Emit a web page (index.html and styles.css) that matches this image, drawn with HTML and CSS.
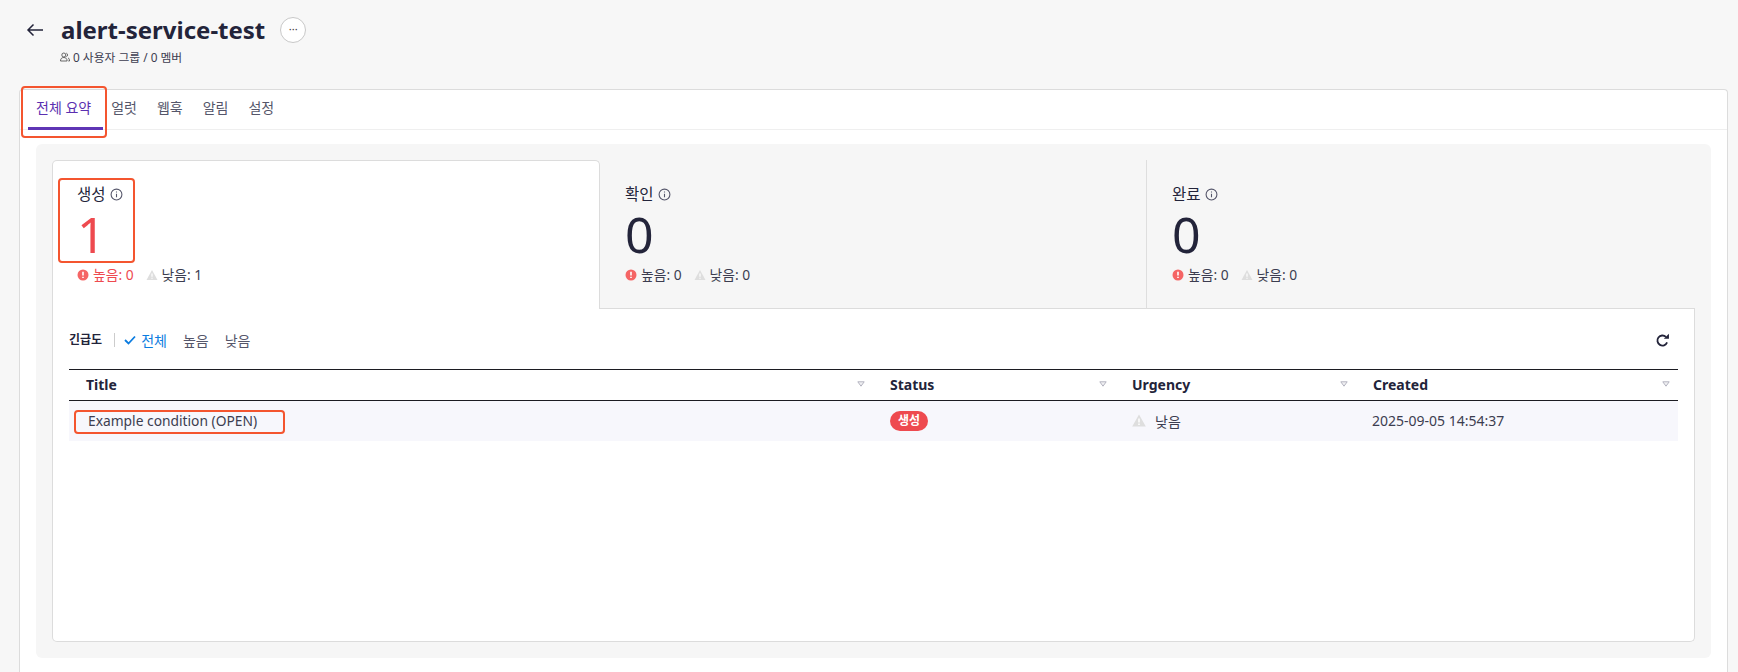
FILE: index.html
```html
<!DOCTYPE html>
<html lang="ko">
<head>
<meta charset="utf-8">
<title>alert-service-test</title>
<link rel="stylesheet" href="styles.css">
</head>
<body>
<header class="page-head">
  <div class="title-row">
    <svg class="back" viewBox="0 0 18 14" width="18" height="14"><path d="M17 7H2M7.5 1.5 2 7l5.500 5.500" fill="none" stroke="#23243a" stroke-width="1.500"/></svg>
    <h1 class="title">alert-service-test</h1>
    <span class="more">···</span>
  </div>
  <div class="sub">
    <svg viewBox="0 0 10 10" width="10" height="10"><circle cx="3.800" cy="3" r="2" fill="none" stroke="#444" stroke-width=".8"/><path d="M.5 9c0-2.300 1.300-3.500 3.300-3.500S7.100 6.700 7.100 9zM6.300 1.100a2 2 0 0 1 0 3.700M8 5.800c1 .5 1.500 1.600 1.500 3.200H8.300" fill="none" stroke="#444" stroke-width=".8"/></svg>
    <span>0 사용자 그룹 / 0 멤버</span>
  </div>
</header>

<main class="card">
  <nav class="tabs">
    <a class="tab active">전체 요약</a>
    <a class="tab">얼럿</a>
    <a class="tab">웹훅</a>
    <a class="tab">알림</a>
    <a class="tab">설정</a>
  </nav>
  <section class="panel">
    <div class="stats">
      <div class="stat selected">
        <div class="stat-label">생성 <svg class="info" viewBox="0 0 12 12" width="13" height="13"><circle cx="6" cy="6" r="5" fill="none" stroke="#55566a"/><path d="M6 5.300v3.200M6 3.200v1" stroke="#55566a"/></svg></div>
        <div class="stat-num red">1</div>
        <div class="counts">
          <span class="count red"><svg viewBox="0 0 12 12" width="12" height="12"><circle cx="6" cy="6" r="5.500" fill="#f56565"/><path d="M6 2.800v3.800M6 7.800v1.300" stroke="#fff" stroke-width="1.600"/></svg>높음: 0</span>
          <span class="count"><svg viewBox="0 0 12 12" width="12" height="12"><path d="M6 1 11.500 11H.5z" fill="#dedede"/><path d="M6 4.500v3.300M6 8.700v1.100" stroke="#fff" stroke-width="1.200"/></svg>낮음: 1</span>
        </div>
      </div>
      <div class="stat">
        <div class="stat-label">확인 <svg class="info" viewBox="0 0 12 12" width="13" height="13"><circle cx="6" cy="6" r="5" fill="none" stroke="#55566a"/><path d="M6 5.300v3.200M6 3.200v1" stroke="#55566a"/></svg></div>
        <div class="stat-num">0</div>
        <div class="counts">
          <span class="count"><svg viewBox="0 0 12 12" width="12" height="12"><circle cx="6" cy="6" r="5.500" fill="#f56565"/><path d="M6 2.800v3.800M6 7.800v1.300" stroke="#fff" stroke-width="1.600"/></svg>높음: 0</span>
          <span class="count"><svg viewBox="0 0 12 12" width="12" height="12"><path d="M6 1 11.500 11H.5z" fill="#dedede"/><path d="M6 4.500v3.300M6 8.700v1.100" stroke="#fff" stroke-width="1.200"/></svg>낮음: 0</span>
        </div>
      </div>
      <div class="stat">
        <div class="stat-label">완료 <svg class="info" viewBox="0 0 12 12" width="13" height="13"><circle cx="6" cy="6" r="5" fill="none" stroke="#55566a"/><path d="M6 5.300v3.200M6 3.200v1" stroke="#55566a"/></svg></div>
        <div class="stat-num">0</div>
        <div class="counts">
          <span class="count"><svg viewBox="0 0 12 12" width="12" height="12"><circle cx="6" cy="6" r="5.500" fill="#f56565"/><path d="M6 2.800v3.800M6 7.800v1.300" stroke="#fff" stroke-width="1.600"/></svg>높음: 0</span>
          <span class="count"><svg viewBox="0 0 12 12" width="12" height="12"><path d="M6 1 11.500 11H.5z" fill="#dedede"/><path d="M6 4.500v3.300M6 8.700v1.100" stroke="#fff" stroke-width="1.200"/></svg>낮음: 0</span>
        </div>
      </div>
    </div>
    <div class="body">
      <div class="filters">
        <strong class="filter-label">긴급도</strong>
        <span class="filter on"><svg viewBox="0 0 12 10" width="12" height="10"><path d="M1 5l3.500 3.500L11 1.500" fill="none" stroke="#0b7ce0" stroke-width="1.800"/></svg>전체</span>
        <span class="filter">높음</span>
        <span class="filter">낮음</span>
        <svg class="refresh" viewBox="0 0 14 14" width="15" height="15"><path d="M11.300 8.800A4.700 4.700 0 1 1 10.200 3.600" fill="none" stroke="#23243a" stroke-width="1.700"/><path d="M8.200 5.400h4.800V.6z" fill="#23243a"/></svg>
      </div>
      <div class="table">
        <div class="row head">
          <div class="cell">Title<svg class="sort" viewBox="0 0 8 6" width="8" height="6"><path d="M.8.8h6.400L4 5.200z" fill="#f0f0f3" stroke="#b4b4c0"/></svg></div>
          <div class="cell">Status<svg class="sort" viewBox="0 0 8 6" width="8" height="6"><path d="M.8.8h6.400L4 5.200z" fill="#f0f0f3" stroke="#b4b4c0"/></svg></div>
          <div class="cell">Urgency<svg class="sort" viewBox="0 0 8 6" width="8" height="6"><path d="M.8.8h6.400L4 5.200z" fill="#f0f0f3" stroke="#b4b4c0"/></svg></div>
          <div class="cell">Created<svg class="sort" viewBox="0 0 8 6" width="8" height="6"><path d="M.8.8h6.400L4 5.200z" fill="#f0f0f3" stroke="#b4b4c0"/></svg></div>
        </div>
        <div class="row data">
          <div class="cell name">Example condition (OPEN)</div>
          <div class="cell"><span class="badge">생성</span></div>
          <div class="cell urgency"><svg viewBox="0 0 14 13" width="14" height="13"><path d="M7 .5 13.800 12.500H.2z" fill="#dedede"/><path d="M7 4.500v4M7 9.500v1.500" stroke="#fff" stroke-width="1.500"/></svg>낮음</div>
          <div class="cell date">2025-09-05 14:54:37</div>
        </div>
      </div>
    </div>
  </section>
</main>

<div class="mark mark-tab"></div>
<div class="mark mark-stat"></div>
<div class="mark mark-row"></div>
</body>
</html>
```

FILE: styles.css
```css
* { box-sizing: border-box; }
html, body { height: 672px; overflow: hidden; }
body {
  margin: 0;
  background: #f7f7f7;
  color: #23243a;
  font-family: "Noto Sans", "Noto Sans CJK KR", sans-serif;
  font-size: 13px;
  position: relative;
}
.page-head { padding: 13px 0 0 26px; height: 89px; }
.title-row { display: flex; align-items: center; height: 34px; }
.back { margin-right: 17px; }
.title { margin: 0; font-size: 24px; font-weight: 700; line-height: 34px; color: #23243a; }
.more {
  width: 26px; height: 26px; margin-left: 15px;
  border: 1px solid #c8c8c8; border-radius: 50%;
  background: #fff; color: #444; font-size: 11px; line-height: 22px; text-align: center;
}
.sub { display: flex; align-items: center; gap: 3px; margin: 2px 0 0 34px; font-size: 11.8px; line-height: 16px; color: #3c3d50; }

.card {
  margin: 0 10px 0 19px;
  height: 583px;
  background: #fff;
  border: 1px solid #dcdcdc;
  border-bottom: 0;
  border-radius: 4px 4px 0 0;
}
.tabs { display: flex; height: 40px; padding-left: 8px; border-bottom: 1px solid #efefef; }
.tab { height: 40px; padding: 8px 8px 0; margin-right: 4px; font-size: 14px; line-height: 20px; color: #55566a; }
.tab.active { color: #5b2fb0; border-bottom: 3px solid #5f35b5; padding-right: 12px; margin-right: 0; }

.panel {
  margin: 14px 16px 0;
  height: 514px;
  padding: 16px;
  background: #f6f6f6;
  border-radius: 6px;
  display: flex;
  flex-direction: column;
}
.stats { display: grid; grid-template-columns: 548px 547px 1fr; height: 149px; }
.stat { padding: 23px 0 0 25px; border-right: 1px solid #dedede; border-bottom: 1px solid #dcdcdc; }
.stat:last-child { border-right: 0; }
.stat.selected {
  padding: 22px 0 0 24px;
  background: #fff;
  border: 1px solid #dcdcdc;
  border-bottom: 0;
  border-radius: 5px 5px 0 0;
}
.stat-label { display: flex; align-items: center; gap: 4px; height: 22px; font-size: 15.500px; line-height: 22px; }
.stat-num { font-size: 50px; line-height: 54px; margin-top: 2px; }
.red { color: #ee4a4f; }
.counts { display: flex; gap: 12px; margin-top: 5px; font-size: 13.800px; line-height: 18px; color: #3c3d50; }
.count { display: flex; align-items: center; gap: 4px; }
.count.red { color: #ee4a4f; }

.body {
  flex: 1;
  background: #fff;
  border: 1px solid #dcdcdc;
  border-top: 0;
  border-radius: 0 0 5px 5px;
  padding: 0 16px;
}
.filters { display: flex; align-items: center; height: 60px; padding-top: 2px; }
.filter-label { font-size: 12px; font-weight: 700; padding-right: 12px; margin-right: 9px; border-right: 1px solid #ccc; line-height: 14px; }
.filter { display: flex; align-items: center; gap: 5px; margin-right: 16px; font-size: 14px; color: #55566a; }
.filter.on { color: #0b7ce0; }
.refresh { margin-left: auto; margin-right: 8px; }

.table { border-top: 1px solid #1c1c22; }
.row { display: grid; grid-template-columns: 804px 242px 241px 1fr; }
.head { height: 31px; border-bottom: 1px solid #1c1c22; font-size: 14px; font-weight: 700; }
.data { height: 40px; background: #f7f7fc; font-size: 14px; color: #3c3d50; }
.cell { display: flex; align-items: center; position: relative; padding: 0 0 2px 17px; }
.data .cell { padding-bottom: 1px; }
.data .name { padding-left: 19px; font-size: 13.800px; }
.data .date { padding-left: 16px; }
.sort { position: absolute; right: 8px; top: 11px; }
.badge { background: #ee4a4f; color: #fff; font-size: 12px; font-weight: 700; line-height: 20px; padding: 0 8px; border-radius: 10px; }
.urgency { gap: 9px; }

.mark { position: absolute; border: 2px solid #f4552f; border-radius: 4px; }
.mark-tab { left: 21px; top: 86px; width: 86px; height: 52px; }
.mark-stat { left: 58px; top: 178px; width: 77px; height: 85px; }
.mark-row { left: 74px; top: 410px; width: 211px; height: 24px; }
```
